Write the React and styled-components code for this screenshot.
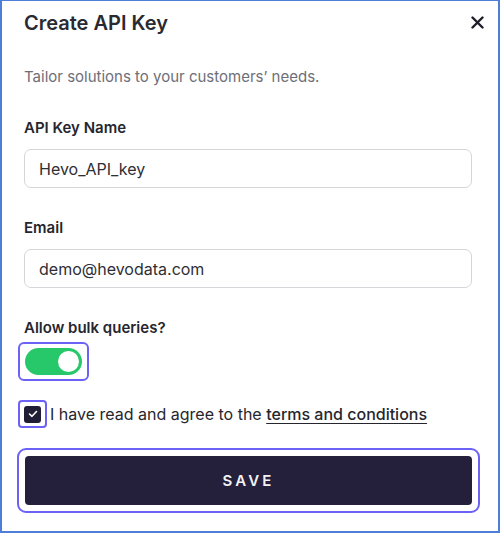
import React, { useState } from 'react'
import styled, { createGlobalStyle } from 'styled-components'

const GlobalStyle = createGlobalStyle`
  html, body {
    margin: 0;
    padding: 0;
    background: #ffffff;
  }
  * {
    box-sizing: border-box;
  }
`

const Frame = styled.div`
  width: 500px;
  height: 533px;
  border: 2px solid #4d7fd9;
  border-top-width: 1px;
  background: #ffffff;
  font-family: Inter, "Noto Sans", sans-serif;
  color: #26262e;
  padding: 0 26px 0 22px;
  display: flex;
  flex-direction: column;
`

const Header = styled.div`
  display: flex;
  align-items: center;
  justify-content: space-between;
  height: 42px;
  padding-top: 1px;
`

const Title = styled.h1`
  margin: 0;
  font-size: 20px;
  font-weight: 600;
  color: #2a2a32;
`

const CloseButton = styled.button`
  border: none;
  background: none;
  padding: 0;
  margin-right: -13px;
  width: 16px;
  height: 16px;
  display: flex;
  align-items: center;
  justify-content: center;
  cursor: pointer;
`

const Subtitle = styled.p`
  margin: 24px 0 0 0;
  font-size: 15px;
  line-height: 20px;
  color: #6e6e78;
`

const Field = styled.div`
  display: flex;
  flex-direction: column;
  margin-top: ${p => p.$top}px;
`

const Label = styled.label`
  font-size: 15px;
  font-weight: 600;
  line-height: 20px;
  color: #26262e;
`

const Input = styled.input`
  margin-top: 11px;
  height: 39px;
  width: 100%;
  border: 1px solid #d6d6da;
  border-radius: 7px;
  padding: 0 14px;
  font-family: Inter, "Noto Sans", sans-serif;
  font-size: 16px;
  color: #2e2e36;
  outline: none;
`

const ToggleRing = styled.div`
  margin-top: 4px;
  margin-left: -6px;
  width: 71px;
  height: 39px;
  border: 2px solid #6c63f6;
  border-radius: 6px;
  display: flex;
  align-items: center;
  justify-content: center;
`

const Toggle = styled.button`
  width: 57px;
  height: 27px;
  border-radius: 14px;
  border: none;
  padding: 3px;
  background: ${p => (p.$on ? '#27c86a' : '#cfcfd6')};
  display: flex;
  justify-content: ${p => (p.$on ? 'flex-end' : 'flex-start')};
  cursor: pointer;
`

const Knob = styled.span`
  width: 21px;
  height: 21px;
  border-radius: 50%;
  background: #ffffff;
`

const AgreeRow = styled.div`
  display: flex;
  align-items: center;
  gap: 3px;
  margin-top: 19px;
  margin-left: -6px;
  height: 28px;
`

const CheckRing = styled.div`
  width: 29px;
  height: 28px;
  border: 2px solid #6c63f6;
  border-radius: 4px;
  display: flex;
  align-items: center;
  justify-content: center;
`

const CheckBox = styled.span`
  width: 17px;
  height: 17px;
  border-radius: 3px;
  background: #201d37;
  display: flex;
  align-items: center;
  justify-content: center;
`

const AgreeText = styled.span`
  font-size: 16px;
  line-height: 20px;
  color: #26262e;
`

const TermsLink = styled.a`
  color: #26262e;
  text-decoration: underline;
  text-underline-offset: 3px;
  font-weight: 500;
`

const SaveRing = styled.div`
  margin-top: 20px;
  margin-left: -7px;
  margin-right: -8px;
  height: 65px;
  border: 2px solid #6c63f6;
  border-radius: 9px;
  padding: 6px;
`

const SaveButton = styled.button`
  width: 100%;
  height: 100%;
  border: none;
  border-radius: 4px;
  background: #24203b;
  color: #f2f2f5;
  font-family: Inter, "Noto Sans", sans-serif;
  font-size: 15px;
  font-weight: 600;
  letter-spacing: 3.2px;
  cursor: pointer;
`

export default function App() {
  const [bulk, setBulk] = useState(true)
  const [name, setName] = useState('Hevo_API_key')
  const [email, setEmail] = useState('demo@hevodata.com')

  return (
    <>
      <GlobalStyle />
      <Frame>
        <Header>
          <Title>Create API Key</Title>
          <CloseButton aria-label="Close">
            <svg width="13" height="13" viewBox="0 0 13 13">
              <path d="M1.5 1.5 L11.5 11.5 M11.5 1.5 L1.5 11.5" stroke="#1e1e28" strokeWidth="2.4" strokeLinecap="round" />
            </svg>
          </CloseButton>
        </Header>
        <Subtitle>Tailor solutions to your customers’ needs.</Subtitle>
        <Field $top={31}>
          <Label>API Key Name</Label>
          <Input value={name} onChange={e => setName(e.target.value)} />
        </Field>
        <Field $top={30}>
          <Label>Email</Label>
          <Input value={email} onChange={e => setEmail(e.target.value)} />
        </Field>
        <Field $top={30}>
          <Label>Allow bulk queries?</Label>
          <ToggleRing>
            <Toggle $on={bulk} onClick={() => setBulk(!bulk)}>
              <Knob />
            </Toggle>
          </ToggleRing>
        </Field>
        <AgreeRow>
          <CheckRing>
            <CheckBox>
              <svg width="10" height="8" viewBox="0 0 10 8">
                <path d="M1.5 4 L4 6.3 L8.5 1.5" fill="none" stroke="#ffffff" strokeWidth="1.6" strokeLinecap="round" strokeLinejoin="round" />
              </svg>
            </CheckBox>
          </CheckRing>
          <AgreeText>
            I have read and agree to the <TermsLink href="#">terms and conditions</TermsLink>
          </AgreeText>
        </AgreeRow>
        <SaveRing>
          <SaveButton>SAVE</SaveButton>
        </SaveRing>
      </Frame>
    </>
  )
}
